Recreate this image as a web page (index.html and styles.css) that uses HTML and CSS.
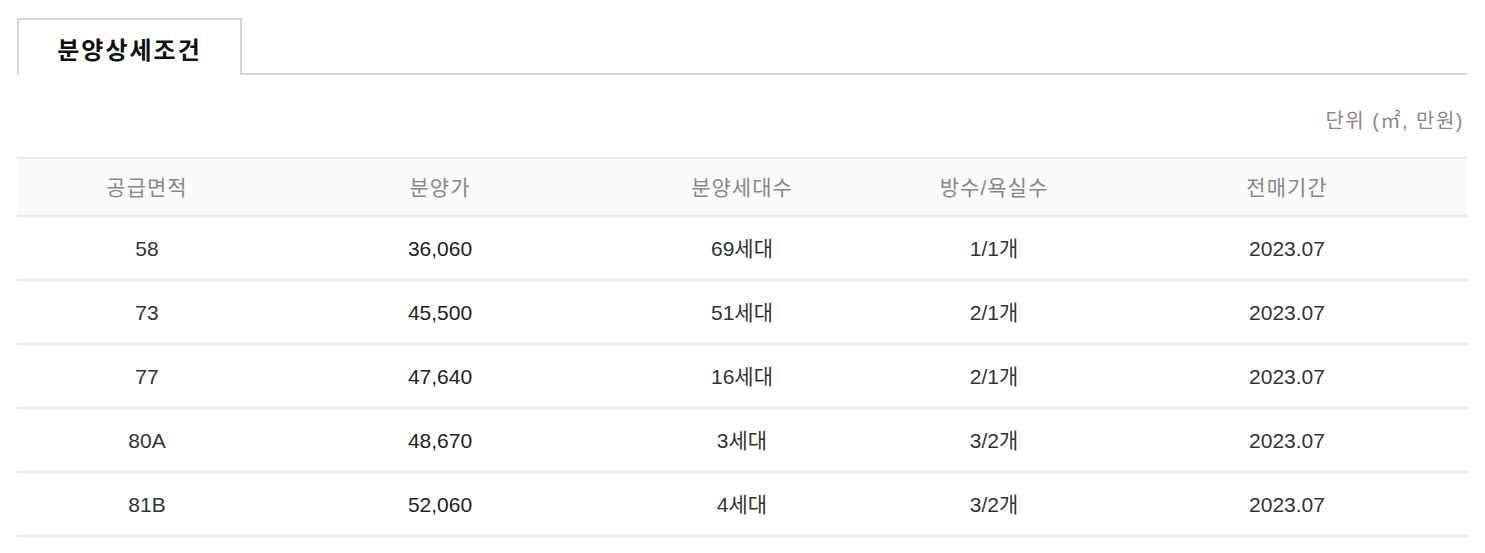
FILE: index.html
```html
<!DOCTYPE html>
<html lang="ko">
<head>
    <meta charset="UTF-8">
    <meta name="viewport" content="width=device-width, initial-scale=1.0">
    <title>분양상세조건</title>
    <link rel="stylesheet" href="styles.css">
</head>
<body>
    <div class="wrap">
        <div class="tabs">
            <div class="tab">분양상세조건</div>
        </div>
        <p class="unit">단위 (㎡, 만원)</p>
        <table class="sale-table">
            <colgroup>
                <col style="width: 260px">
                <col style="width: 326px">
                <col style="width: 278px">
                <col style="width: 226px">
                <col>
            </colgroup>
            <thead>
                <tr>
                    <th>공급면적</th>
                    <th>분양가</th>
                    <th>분양세대수</th>
                    <th>방수/욕실수</th>
                    <th>전매기간</th>
                </tr>
            </thead>
            <tbody>
                <tr><td>58</td><td class="price">36,060</td><td>69세대</td><td>1/1개</td><td>2023.07</td></tr>
                <tr><td>73</td><td class="price">45,500</td><td>51세대</td><td>2/1개</td><td>2023.07</td></tr>
                <tr><td>77</td><td class="price">47,640</td><td>16세대</td><td>2/1개</td><td>2023.07</td></tr>
                <tr><td>80A</td><td class="price">48,670</td><td>3세대</td><td>3/2개</td><td>2023.07</td></tr>
                <tr><td>81B</td><td class="price">52,060</td><td>4세대</td><td>3/2개</td><td>2023.07</td></tr>
            </tbody>
        </table>
    </div>
</body>
</html>
```

FILE: styles.css
```css
body {
    margin: 0;
    background-color: #fff;
    font-family: "Liberation Sans", "Noto Sans CJK KR", sans-serif;
    color: #333;
}
.wrap { padding: 18px 18px 0 17px; }

.tabs {
    display: flex;
    border-bottom: 2px solid #d6d6d6;
}
.tab {
    width: 221px;
    height: 53px;
    padding-top: 2px;
    margin-bottom: -2px;
    border: 2px solid #d6d6d6;
    border-bottom: none;
    background-color: #fff;
    display: flex;
    align-items: center;
    justify-content: center;
    font-size: 24px;
    font-weight: bold;
    color: #111;
    letter-spacing: 2px;
}

.unit {
    margin: 34px 3px 0 0;
    text-align: right;
    font-size: 20px;
    line-height: 24px;
    color: #888;
    letter-spacing: 1.5px;
}

.sale-table {
    width: 100%;
    margin-top: 24px;
    border-collapse: collapse;
    table-layout: fixed;
    border-top: 2px solid #ebebeb;
}
.sale-table th {
    height: 55px;
    padding: 1px 0 0;
    line-height: 24px;
    background-color: #fafafa;
    border-bottom: 2px solid #e8e8e8;
    font-size: 21px;
    font-weight: normal;
    color: #888;
    letter-spacing: 1px;
}
.sale-table td {
    height: 60px;
    padding: 2px 0 0;
    line-height: 24px;
    text-align: center;
    border-bottom: 2px solid #e8e8e8;
    font-size: 21px;
    color: #333;
}
.sale-table td.price { color: #222; }
```
